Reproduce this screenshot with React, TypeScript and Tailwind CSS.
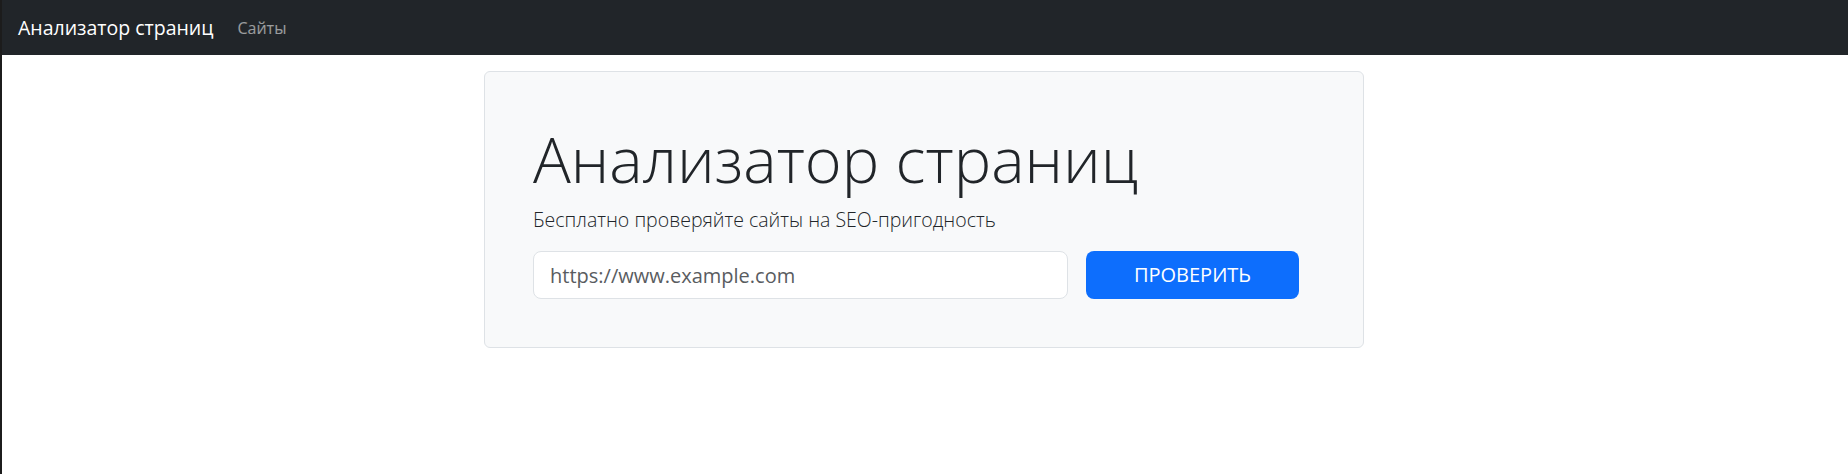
import React from 'react';

export default function App() {
  return (
    <div className="min-h-screen bg-white text-[#212529] font-['Open_Sans','Noto_Sans',sans-serif]">
      <div className="fixed left-0 top-0 h-full w-[2px] bg-[#1c1c1c]" />

      <nav className="flex h-[55px] items-center bg-[#212529] pl-[18px] pr-4">
        <a href="#" className="mr-4 text-[19.5px] leading-[30px] text-white">
          Анализатор страниц
        </a>
        <a href="#" className="px-2 text-[16px] leading-6 text-white/55">
          Сайты
        </a>
      </nav>

      <main className="mt-4 flex justify-center">
        <div className="w-[880px] rounded-md border border-[#dee2e6] bg-[#f8f9fa] p-12">
          <h1 className="mb-2 text-[63px] font-light leading-[77px]">Анализатор страниц</h1>
          <p className="mb-4 text-[19.5px] font-light leading-[30px]">
            Бесплатно проверяйте сайты на SEO-пригодность
          </p>
          <form className="flex gap-[18px]" onSubmit={(e) => e.preventDefault()}>
            <input
              type="url"
              name="url"
              placeholder="https://www.example.com"
              className="h-[48px] w-[535px] rounded-lg border border-[#dee2e6] bg-white px-4 text-[20px] text-[#212529] outline-none placeholder:text-[#595c5f]"
            />
            <button
              type="submit"
              className="h-[48px] w-[213px] rounded-lg bg-[#0d6efd] text-[20px] uppercase text-white"
            >
              Проверить
            </button>
          </form>
        </div>
      </main>
    </div>
  );
}
